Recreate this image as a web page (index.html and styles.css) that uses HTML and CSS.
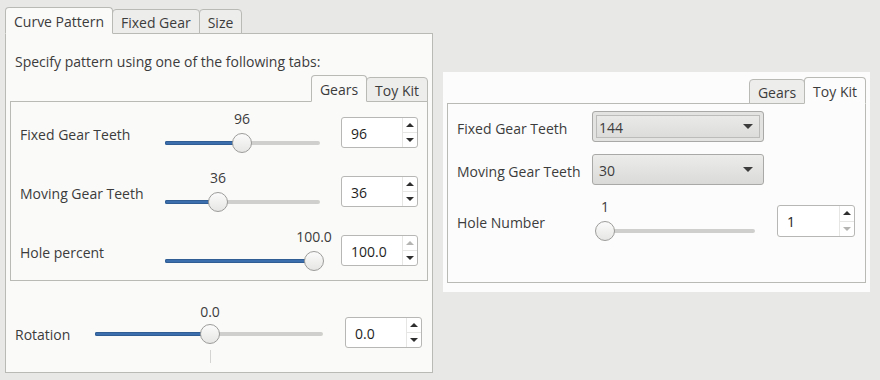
FILE: index.html
```html
<!DOCTYPE html>
<html lang="en">
<head>
    <meta charset="UTF-8">
    <title>Spyrogimp</title>
    <link rel="stylesheet" href="styles.css">
</head>
<body>
    <div class="notebook main">
        <div class="tabs">
            <div class="tab active">Curve Pattern</div>
            <div class="tab">Fixed Gear</div>
            <div class="tab">Size</div>
        </div>
        <div class="page main-page">
            <p class="intro">Specify pattern using one of the following tabs:</p>

            <div class="notebook inner">
                <div class="tabs end">
                    <div class="tab active">Gears</div>
                    <div class="tab">Toy Kit</div>
                </div>
                <div class="page gears-page">
                    <div class="row">
                        <span class="label">Fixed Gear Teeth</span>
                        <div class="slider" style="--p: 0.49">
                            <span class="value">96</span>
                            <div class="track"><div class="fill"></div><div class="knob"></div></div>
                        </div>
                        <div class="spin">
                            <span class="spin-text">96</span>
                            <div class="spin-buttons">
                                <span class="arrow up"></span>
                                <span class="arrow down"></span>
                            </div>
                        </div>
                    </div>
                    <div class="row">
                        <span class="label">Moving Gear Teeth</span>
                        <div class="slider" style="--p: 0.32">
                            <span class="value">36</span>
                            <div class="track"><div class="fill"></div><div class="knob"></div></div>
                        </div>
                        <div class="spin">
                            <span class="spin-text">36</span>
                            <div class="spin-buttons">
                                <span class="arrow up"></span>
                                <span class="arrow down"></span>
                            </div>
                        </div>
                    </div>
                    <div class="row">
                        <span class="label">Hole percent</span>
                        <div class="slider" style="--p: 1">
                            <span class="value">100.0</span>
                            <div class="track"><div class="fill"></div><div class="knob"></div></div>
                        </div>
                        <div class="spin">
                            <span class="spin-text">100.0</span>
                            <div class="spin-buttons">
                                <span class="arrow up disabled"></span>
                                <span class="arrow down"></span>
                            </div>
                        </div>
                    </div>
                </div>
            </div>

            <div class="row rotation">
                <span class="label">Rotation</span>
                <div class="slider" style="--p: 0.5">
                    <span class="value">0.0</span>
                    <div class="track"><div class="fill"></div><div class="knob"></div></div>
                    <span class="tick"></span>
                </div>
                <div class="spin">
                    <span class="spin-text">0.0</span>
                    <div class="spin-buttons">
                        <span class="arrow up"></span>
                        <span class="arrow down"></span>
                    </div>
                </div>
            </div>
        </div>
    </div>

    <div class="card">
        <div class="notebook toy">
            <div class="tabs end">
                <div class="tab">Gears</div>
                <div class="tab active">Toy Kit</div>
            </div>
            <div class="page toy-page">
                <div class="row combo-row">
                    <span class="label">Fixed Gear Teeth</span>
                    <div class="combo focused">
                        <span class="combo-text">144</span>
                        <span class="combo-arrow"></span>
                    </div>
                </div>
                <div class="row combo-row">
                    <span class="label">Moving Gear Teeth</span>
                    <div class="combo">
                        <span class="combo-text">30</span>
                        <span class="combo-arrow"></span>
                    </div>
                </div>
                <div class="row hole-row">
                    <span class="label">Hole Number</span>
                    <div class="slider" style="--p: 0">
                        <span class="value">1</span>
                        <div class="track"><div class="fill"></div><div class="knob"></div></div>
                    </div>
                    <div class="spin">
                        <span class="spin-text">1</span>
                        <div class="spin-buttons">
                            <span class="arrow up"></span>
                            <span class="arrow down disabled"></span>
                        </div>
                    </div>
                </div>
            </div>
        </div>
    </div>
</body>
</html>
```

FILE: styles.css
```css
* {
    margin: 0;
    padding: 0;
    box-sizing: border-box;
}

body {
    font-family: "Open Sans", "Noto Sans", sans-serif;
    font-size: 14px;
    color: #3c3c3c;
    background: #e8e8e7;
    display: flex;
    align-items: flex-start;
    width: 880px;
    height: 380px;
    overflow: hidden;
}

/* notebooks */

.tabs {
    display: flex;
    align-items: flex-end;
    margin-bottom: -1px;
    position: relative;
    z-index: 1;
}

.tabs.end {
    justify-content: flex-end;
}

.tab {
    height: 25px;
    padding: 1px 8px 0;
    line-height: 23px;
    background: #ededeb;
    border: 1px solid #b9b9b6;
    border-radius: 4px 4px 0 0;
    white-space: nowrap;
}

.tab + .tab {
    margin-left: -1px;
}

.tab.active {
    height: 27px;
    line-height: 26px;
    background: #fafaf9;
    border-bottom-color: #fafaf9;
    position: relative;
    z-index: 1;
}

.card .tab.active {
    background: #fcfcfc;
    border-bottom-color: #fcfcfc;
}

.page {
    background: #fafaf9;
    border: 1px solid #b9b9b6;
}

.notebook.main {
    width: 428px;
    margin: 7px 0 0 5px;
}

.main-page {
    height: 340px;
    padding: 0 4px 0 4px;
}

.intro {
    margin: 19px 0 0 5px;
    line-height: 18px;
}

.notebook.inner {
    margin-top: 4px;
}

.gears-page {
    height: 180px;
    padding-top: 1px;
}

/* rows */

.row {
    display: flex;
    align-items: center;
}

.label {
    padding-top: 3px;
}

.gears-page .row {
    height: 59px;
    padding-left: 9px;
}

.gears-page .label {
    width: 145px;
}

.gears-page .slider {
    width: 155px;
    margin-right: 21px;
}

.rotation {
    margin-top: 21px;
    padding-left: 5px;
}

.rotation .label {
    width: 80px;
}

.rotation .slider {
    width: 228px;
    margin-right: 22px;
}

/* scale */

.slider {
    display: flex;
    flex-direction: column;
    padding-bottom: 4px;
}

.value {
    display: block;
    width: max-content;
    padding-top: 2px;
    line-height: 16px;
    margin-left: calc(var(--p) * (100% - 14px) + 8px);
    transform: translateX(-50%);
}

.track {
    position: relative;
    height: 20px;
    margin-top: 6px;
}

.track::before {
    content: "";
    position: absolute;
    left: 0;
    right: 0;
    top: 8px;
    height: 4px;
    border-radius: 2px;
    background: #cfcfcd;
}

.fill {
    position: absolute;
    left: 0;
    top: 8px;
    height: 4px;
    width: calc(var(--p) * (100% - 14px) + 8px);
    border-radius: 2px;
    background: #3b6eac;
    box-shadow: inset 0 0 0 1px #2f5d94;
}

.knob {
    position: absolute;
    top: 0;
    left: calc(var(--p) * (100% - 14px) - 2px);
    width: 20px;
    height: 20px;
    border-radius: 50%;
    background: linear-gradient(#fbfbfb, #e6e6e4);
    border: 1px solid #9c9c9a;
}

.rotation .slider {
    padding-bottom: 0;
}

.rotation .track {
    margin-top: 4px;
}

.tick {
    display: block;
    width: 1px;
    height: 13px;
    margin-top: 6px;
    margin-left: calc(var(--p) * (100% - 14px) + 8px);
    background: #d4d4d2;
}

/* spin buttons */

.spin {
    display: flex;
    width: 77px;
    height: 31px;
    background: #ffffff;
    border: 1px solid #b7b7b5;
    border-radius: 3px;
}

.spin-text {
    flex: 1;
    padding: 2px 0 0 9px;
    line-height: 27px;
    color: #1e1e1e;
}

.spin-buttons {
    width: 15px;
    display: flex;
    flex-direction: column;
    border-left: 1px solid #e6e6e4;
}

.arrow {
    flex: 1;
    display: flex;
    align-items: center;
    justify-content: center;
}

.arrow.up {
    border-bottom: 1px solid #e6e6e4;
}

.arrow::after {
    content: "";
    border-left: 4px solid transparent;
    border-right: 4px solid transparent;
}

.arrow.up::after {
    border-bottom: 4px solid #2e2e2e;
}

.arrow.down::after {
    border-top: 4px solid #2e2e2e;
}

.arrow.up.disabled::after {
    border-bottom-color: #b4b4b2;
}

.arrow.down.disabled::after {
    border-top-color: #b4b4b2;
}

/* toy kit card */

.card {
    width: 427px;
    margin: 72px 0 0 10px;
    padding: 5px 4px 9px 4px;
    background: #fcfcfc;
}

.toy-page {
    height: 180px;
    background: #fcfcfc;
    padding: 7px 0 0 9px;
}

.toy-page .label {
    width: 135px;
}

.combo-row {
    margin-bottom: 12px;
}

.combo {
    width: 172px;
    height: 31px;
    display: flex;
    align-items: center;
    padding: 0 10px 0 6px;
    border: 1px solid #a9a9a7;
    border-radius: 3px;
    background: linear-gradient(#ececeb, #dadad8);
}

.combo.focused {
    box-shadow: inset 0 0 0 3px #e3e3e1, inset 0 0 0 4px #bcbcba;
}

.combo-text {
    flex: 1;
    padding-top: 2px;
}

.combo-arrow {
    border-left: 5px solid transparent;
    border-right: 5px solid transparent;
    border-top: 5px solid #3c3c3c;
}

.hole-row {
    margin-top: 1px;
}

.hole-row .slider {
    width: 158px;
    margin: 0 22px 0 5px;
}

.hole-row .spin {
    width: 78px;
    height: 32px;
}
```
